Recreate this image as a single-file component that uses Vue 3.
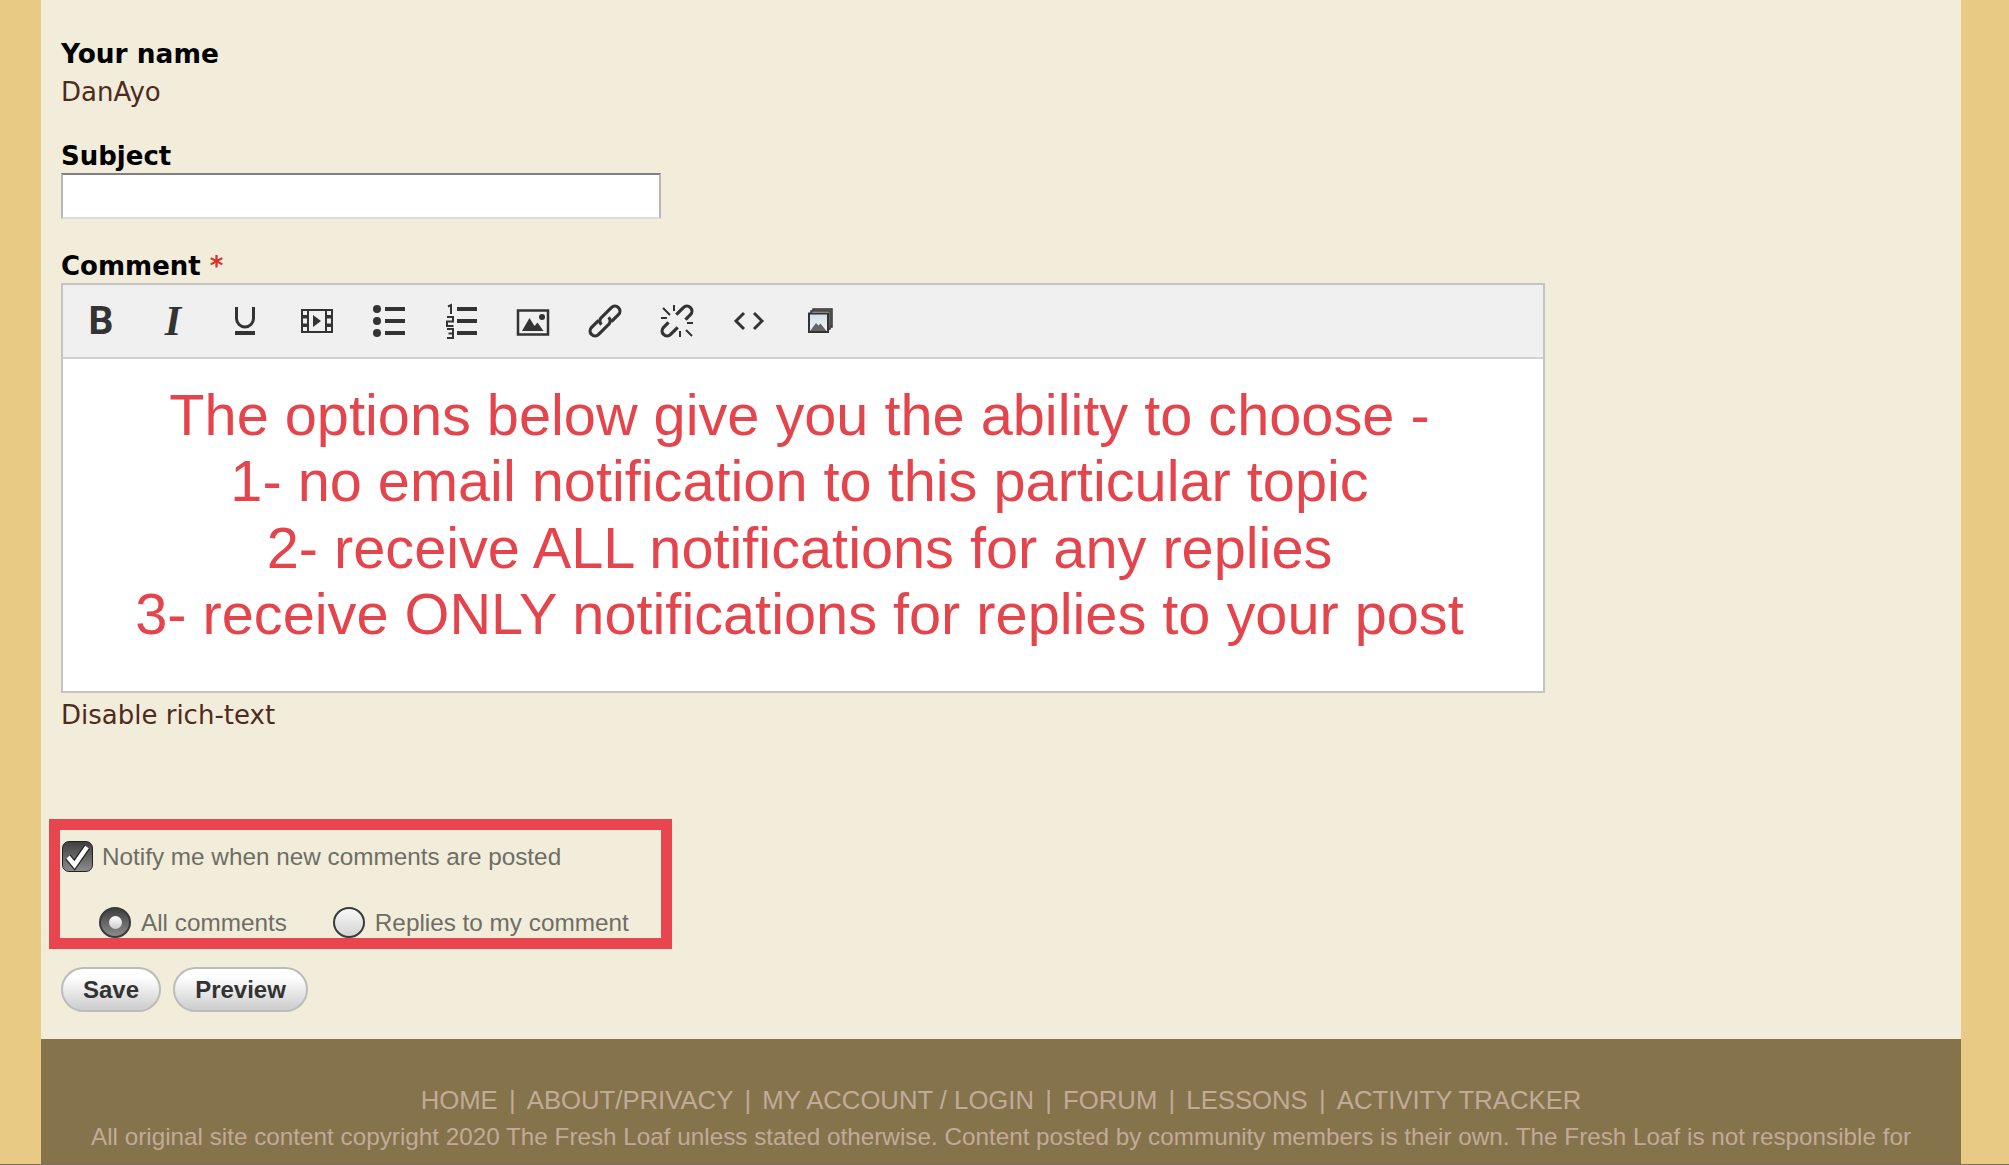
<script setup>
const links = ['HOME', 'ABOUT/PRIVACY', 'MY ACCOUNT / LOGIN', 'FORUM', 'LESSONS', 'ACTIVITY TRACKER']
const lines = [
  'The options below give you the ability to choose -',
  '1- no email notification to this particular topic',
  '2- receive ALL notifications for any replies',
  '3- receive ONLY notifications for replies to your post'
]
</script>

<template>
  <div class="page">
    <main class="main">
      <div class="field name-field">
        <div class="label your-name">Your name</div>
        <div class="name">DanAyo</div>
      </div>
      <div class="field subject-field">
        <label class="label" for="subject">Subject</label>
        <input id="subject" class="subject" type="text" />
      </div>
      <div class="field comment-field">
        <div class="label">Comment <span class="req">*</span></div>
        <div class="editor">
          <div class="toolbar">
            <span class="tool"><span class="glyph-b">B</span></span>
            <span class="tool"><span class="glyph-i">I</span></span>
            <span class="tool">
              <svg viewBox="0 0 40 40" width="40" height="40"><path d="M11.5 6v11.500a8.500 8.500 0 0 0 17 0V6" fill="none" stroke="#333" stroke-width="3"/><rect x="10" y="30" width="20" height="4" fill="#333"/></svg>
            </span>
            <span class="tool">
              <svg viewBox="0 0 40 40" width="40" height="40"><path fill="#333" fill-rule="evenodd" d="M4 8h32v24H4zM6 10v4h4v-4zM6 17.500v5h4v-5zM6 26v4h4v-4zM30 10v4h4v-4zM30 17.500v5h4v-5zM30 26v4h4v-4zM12 10v20h16V10z"/><path fill="#333" d="M16 14l8 6-8 6z"/></svg>
            </span>
            <span class="tool">
              <svg viewBox="0 0 40 40" width="40" height="40"><g fill="#333"><circle cx="8" cy="8" r="4"/><circle cx="8" cy="20" r="4"/><circle cx="8" cy="32" r="4"/><rect x="16" y="6" width="20" height="4"/><rect x="16" y="18" width="20" height="4"/><rect x="16" y="30" width="20" height="4"/></g></svg>
            </span>
            <span class="tool">
              <svg viewBox="0 0 40 40" width="40" height="40"><g fill="#333"><rect x="16" y="6" width="20" height="4"/><rect x="16" y="18" width="20" height="4"/><rect x="16" y="30" width="20" height="4"/></g><g fill="none" stroke="#333" stroke-width="2"><path d="M7 5.500l3-1.500v9"/><path d="M6 16h6v4.500H6V25h6.500"/><path d="M6 28h6v4.500H7.500M12 32.500V37H6"/></g></svg>
            </span>
            <span class="tool">
              <svg viewBox="0 0 40 40" width="40" height="40"><rect x="5" y="9.500" width="30" height="24" fill="none" stroke="#333" stroke-width="2.500"/><circle cx="29" cy="16" r="3" fill="#333"/><path fill="#333" d="M9 30l7.500-13 5 8 3-3.500 6 8.500z"/></svg>
            </span>
            <span class="tool">
              <svg viewBox="0 0 40 40" width="40" height="40"><g transform="rotate(-45 20 20) translate(20 20)" fill="none" stroke="#333" stroke-width="3.200"><path d="M-5 0A5 5 0 0 1-1-5H14A5 5 0 0 1 14 5H4"/><path d="M5 0A5 5 0 0 1 1 5H-14A5 5 0 0 1-14-5H-4"/></g></svg>
            </span>
            <span class="tool">
              <svg viewBox="0 0 40 40" width="40" height="40"><g transform="rotate(-45 20 20) translate(20 20)" fill="none" stroke="#333" stroke-width="3.200"><path d="M4-5H14A5 5 0 0 1 14 5H7"/><path d="M-4 5H-14A5 5 0 0 1-14-5H-7"/></g><g fill="none" stroke="#333" stroke-width="2"><path d="M6 7l7 7M17 4v6M4 17h6M30 22h6M23 30v6M29 29l6 6"/></g></svg>
            </span>
            <span class="tool">
              <svg viewBox="0 0 40 40" width="40" height="40"><path d="M15 12l-8 8 8 8M25 12l8 8-8 8" fill="none" stroke="#333" stroke-width="3"/></svg>
            </span>
            <span class="tool">
              <svg viewBox="0 0 40 40" width="40" height="40">
                <defs>
                  <linearGradient id="sky" x1="0" y1="0" x2="0" y2="1"><stop offset="0" stop-color="#cfe0ea"/><stop offset="1" stop-color="#f4f4f4"/></linearGradient>
                </defs>
                <rect x="12" y="8" width="19" height="18" fill="#999" stroke="#333" stroke-width="1.500"/>
                <rect x="10" y="10" width="19" height="18" fill="#ddd" stroke="#333" stroke-width="1.500"/>
                <rect x="8" y="12.500" width="19" height="18.500" fill="url(#sky)" stroke="#333" stroke-width="2"/>
                <path d="M9 30l6-8 2.500 2.500 2-2 6 7.500z" fill="#666"/>
              </svg>
            </span>
          </div>
          <div class="content">
            <p v-for="line in lines" :key="line">{{ line }}</p>
          </div>
        </div>
        <div class="disable">Disable rich-text</div>
      </div>

      <section class="notify">
        <div class="annotation"></div>
        <div class="check-row">
          <span class="box">
            <svg viewBox="0 0 31 31" width="31" height="31"><path d="M6 16l6.500 8L25 6" fill="none" stroke="#222" stroke-width="7"/><path d="M6 16l6.500 8L25 6" fill="none" stroke="#fff" stroke-width="4.500"/></svg>
          </span>
          <span>Notify me when new comments are posted</span>
        </div>
        <div class="radio-row">
          <span class="opt"><span class="radio on"><span class="dot"></span></span>All comments</span>
          <span class="opt"><span class="radio"></span>Replies to my comment</span>
        </div>
      </section>

      <div class="actions">
        <button class="btn save" type="button">Save</button>
        <button class="btn preview" type="button">Preview</button>
      </div>

      <footer class="footer">
        <nav class="nav">
          <template v-for="(link, i) in links" :key="link">
            <span v-if="i" class="sep">|</span><a>{{ link }}</a>
          </template>
        </nav>
        <p class="legal">All original site content copyright 2020 The Fresh Loaf unless stated otherwise. Content posted by community members is their own. The Fresh Loaf is not responsible for content posted by its members, nor does it endorse any product or opinion expressed in them. This site is powered by Drupal.</p>
      </footer>
    </main>
  </div>
</template>

<style>
html, body { margin: 0; overflow: hidden; background: #e8ca85; }
</style>

<style scoped>
.page {
  box-sizing: border-box;
  height: 1165px;
  overflow: hidden;
  padding: 0 48px 0 41px;
  background: #e8ca85;
  border-bottom: 1px solid #77715d;
}
.main {
  min-height: 100%;
  background: #f1edda;
  padding: 39px 0 0 20px;
  font-family: "DejaVu Sans", sans-serif;
}
.field { display: block; }
.label {
  display: block;
  font-weight: 700;
  font-size: 26px;
  line-height: 30px;
  color: #000;
}
.your-name { font-size: 26.4px; }
.name { font-size: 26px; line-height: 30px; margin-top: 8px; color: #4e2b1c; }
.subject-field { margin-top: 34px; }
.subject {
  display: block;
  box-sizing: border-box;
  width: 600px;
  height: 46px;
  margin: 2px 0 0;
  padding: 0;
  background: #fff;
  border-style: solid;
  border-width: 2px;
  border-color: #808080 #b8b8b8 #dcdcdc #b8b8b8;
}
.comment-field { margin-top: 32px; }
.req { color: #d8322a; }
.editor {
  box-sizing: border-box;
  width: 1484px;
  height: 410px;
  margin-top: 2px;
  border: 2px solid #c4c4c2;
  background: #fff;
}
.toolbar {
  display: flex;
  align-items: center;
  box-sizing: border-box;
  height: 74px;
  padding-left: 2px;
  background: #f0f0f0;
  border-bottom: 2px solid #d2d2d0;
}
.tool {
  flex: none;
  display: flex;
  align-items: center;
  justify-content: center;
  width: 72px;
  height: 40px;
  color: #333;
}
.glyph-b { font: 700 39px/40px Roboto, sans-serif; }
.glyph-i { font: italic 700 42px/40px "Liberation Serif", serif; }
.content {
  padding: 23px 7px 0 0;
  text-align: center;
  font-family: "Liberation Sans", sans-serif;
  font-size: 57.7px;
  line-height: 66.3px;
  color: #e4454c;
}
.content p { margin: 0; }
.disable { margin-top: 6px; font-size: 26px; line-height: 32px; color: #4e2b1c; }
.notify {
  position: relative;
  margin-top: 99px;
  width: 601px;
  height: 109px;
  font-family: "Liberation Sans", sans-serif;
  font-size: 24.3px;
  color: #6f6d66;
}
.annotation {
  position: absolute;
  left: -12px;
  top: -11px;
  width: 623px;
  height: 130px;
  box-sizing: border-box;
  border: 11px solid #e9454f;
}
.check-row { display: flex; align-items: center; gap: 9px; padding: 11px 0 0 1px; height: 31px; }
.box {
  flex: none;
  box-sizing: border-box;
  width: 31px;
  height: 31px;
  border: 1px solid #222;
  border-radius: 7px;
  background: linear-gradient(#3f3f3f, #8b8b8b);
  display: flex;
  align-items: center;
  justify-content: center;
}
.box svg { flex: none; }
.radio-row { display: flex; padding: 35px 0 0 38px; }
.opt { display: flex; align-items: center; gap: 10px; height: 31px; }
.opt + .opt { margin-left: 46px; }
.radio {
  flex: none;
  box-sizing: border-box;
  width: 32px;
  height: 31px;
  border: 2px solid #3a3a3a;
  border-radius: 50%;
  background: linear-gradient(#f8f8f8, #d4d4d4);
  display: flex;
  align-items: center;
  justify-content: center;
}
.radio.on { background: linear-gradient(#3f3f3f, #8b8b8b); }
.dot { width: 13px; height: 13px; border-radius: 50%; background: linear-gradient(#fff, #ccc); }
.actions { display: flex; gap: 12px; margin-top: 28px; }
.btn {
  box-sizing: border-box;
  height: 45px;
  padding: 0;
  border: 2px solid #bcbcb8;
  border-radius: 23px;
  background: linear-gradient(#fff 20%, #ccc);
  font-family: "Liberation Sans", sans-serif;
  font-weight: 700;
  font-size: 24px;
  color: #333;
}
.save { width: 100px; }
.preview { width: 135px; }
.footer {
  margin: 27px 0 0 -20px;
  padding: 44px 0 0;
  background: #85734c;
  text-align: center;
  font-family: "Liberation Sans", sans-serif;
  color: #c2aa98;
  height: 200px;
  box-sizing: border-box;
}
.nav { font-size: 25.7px; line-height: 34px; }
.sep { margin: 0 11.2px; }
.legal { margin: 1.5px auto 0; width: 1860px; font-size: 24.27px; line-height: 36px; }
</style>
